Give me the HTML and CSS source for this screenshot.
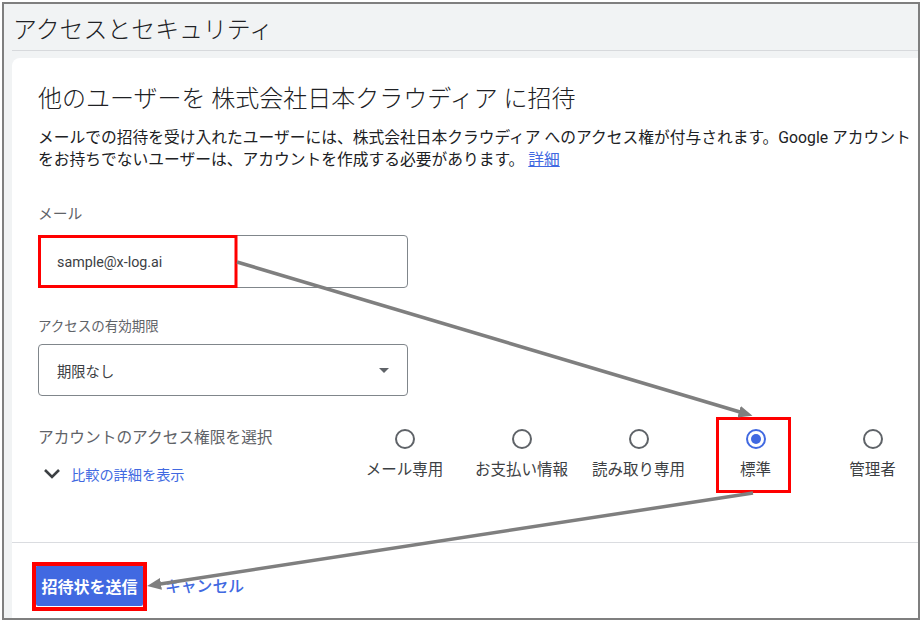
FILE: index.html
```html
<!DOCTYPE html>
<html lang="ja">
<head>
<meta charset="utf-8">
<title>アクセスとセキュリティ</title>
<link rel="stylesheet" href="styles.css">
</head>
<body>
<div class="frame">
  <header class="topbar">アクセスとセキュリティ</header>
  <main class="card">
    <div class="card-body">
      <h1 class="heading">他のユーザーを 株式会社日本クラウディア に招待</h1>
      <p class="desc">メールでの招待を受け入れたユーザーには、株式会社日本クラウディア へのアクセス権が付与されます。Google アカウント<br>をお持ちでないユーザーは、アカウントを作成する必要があります。 <a class="link-u" href="#">詳細</a></p>

      <label class="field-label label-mail">メール</label>
      <div class="input">sample@x-log.ai</div>

      <label class="field-label label-exp">アクセスの有効期限</label>
      <div class="select">
        <span>期限なし</span>
        <span class="caret"></span>
      </div>

      <div class="perm">
        <div class="perm-left">
          <div class="perm-label">アカウントのアクセス権限を選択</div>
          <div class="compare">
            <svg class="chev" width="18" height="11" viewBox="0 0 18 11"><path d="M2 2 L9 9 L16 2" fill="none" stroke="#3c4043" stroke-width="2.6"/></svg>
            <a href="#" class="link">比較の詳細を表示</a>
          </div>
        </div>
        <div class="radios">
          <div class="opt"><span class="radio"></span><span class="opt-label">メール専用</span></div>
          <div class="opt"><span class="radio"></span><span class="opt-label">お支払い情報</span></div>
          <div class="opt"><span class="radio"></span><span class="opt-label">読み取り専用</span></div>
          <div class="opt"><span class="radio on"></span><span class="opt-label">標準</span></div>
          <div class="opt"><span class="radio"></span><span class="opt-label">管理者</span></div>
        </div>
      </div>
    </div>
    <div class="card-footer">
      <button class="btn">招待状を送信</button>
      <a href="#" class="cancel">キャンセル</a>
    </div>
  </main>
</div>

<svg class="notes" width="922" height="622" viewBox="0 0 922 622">
  <defs>
    <marker id="ah" markerUnits="userSpaceOnUse" markerWidth="14" markerHeight="12" refX="1" refY="6" orient="auto">
      <path d="M0 0 L14 6 L0 12 Z" fill="#7f7f7f"/>
    </marker>
  </defs>
  <rect x="39.5" y="236.5" width="196.5" height="50" fill="none" stroke="#ff0000" stroke-width="3"/>
  <rect x="717.5" y="418.5" width="72" height="73" fill="none" stroke="#ff0000" stroke-width="3"/>
  <rect x="34" y="564" width="111" height="45" fill="none" stroke="#ff0000" stroke-width="4"/>
  <line x1="237" y1="262" x2="740" y2="412" stroke="#7f7f7f" stroke-width="3.5" marker-end="url(#ah)"/>
  <line x1="753" y1="493" x2="160" y2="584" stroke="#7f7f7f" stroke-width="3.5" marker-end="url(#ah)"/>
</svg>
</body>
</html>
```

FILE: styles.css
```css
* { box-sizing: border-box; }

html, body {
  margin: 0;
  padding: 0;
  width: 922px;
  height: 622px;
  overflow: hidden;
  background: #ffffff;
  font-family: Roboto, "Noto Sans CJK JP", sans-serif;
  color: #202124;
}

body { position: relative; }

.frame {
  margin: 2px;
  width: 918px;
  height: 618px;
  border: 2px solid #7f7f7f;
  background: #f1f3f4;
  overflow: hidden;
  display: flex;
  flex-direction: column;
}

.topbar {
  flex: none;
  height: 47px;
  margin-left: 8px;
  padding-left: 1px;
  border-bottom: 1px solid #d7d9dc;
  display: flex;
  align-items: center;
  font-size: 23.9px;
  font-weight: 300;
  color: #202124;
}

.card {
  flex: 1;
  margin: 7px 0 0 8px;
  background: #ffffff;
  border-radius: 8px 0 0 0;
  display: flex;
  flex-direction: column;
}

.card-body {
  padding: 25px 0 0 26px;
  height: 485px;
  border-bottom: 1px solid #dadce0;
}

.heading {
  margin: 0;
  font-size: 24px;
  font-weight: 300;
  line-height: 32px;
  color: #202124;
}

.desc {
  margin: 12px 0 0;
  font-size: 15.75px;
  line-height: 22px;
  color: #202124;
}

.link-u {
  color: #4169e1;
  text-decoration: underline;
}

.field-label {
  display: block;
  line-height: 20px;
  color: #5f6368;
}

.label-mail {
  margin-top: 33px;
  font-size: 14.8px;
}

.label-exp {
  margin-top: 28px;
  font-size: 13.5px;
}

.input {
  margin-top: 11px;
  width: 370px;
  height: 53px;
  border: 1px solid #80868b;
  border-radius: 4px;
  padding-left: 18px;
  display: flex;
  align-items: center;
  font-size: 14.3px;
  color: #3c4043;
}

.select {
  margin-top: 8px;
  width: 370px;
  height: 52px;
  border: 1px solid #80868b;
  border-radius: 4px;
  padding: 0 18px 0 18px;
  display: flex;
  align-items: center;
  justify-content: space-between;
  font-size: 14.3px;
  color: #3c4043;
}

.caret {
  width: 0;
  height: 0;
  border-left: 5px solid transparent;
  border-right: 5px solid transparent;
  border-top: 5px solid #5f6368;
}

.perm {
  margin-top: 32px;
  display: flex;
}

.perm-left {
  width: 308px;
  flex: none;
}

.perm-label {
  font-size: 15.7px;
  line-height: 20px;
  color: #5f6368;
}

.compare {
  margin-top: 17px;
  height: 20px;
  display: flex;
  align-items: center;
  padding-left: 5px;
  gap: 10px;
}

.chev { display: block; margin-top: -4px; }

.link {
  color: #4169e1;
  text-decoration: none;
  font-size: 14.2px;
  line-height: 20px;
}

.radios {
  display: grid;
  grid-template-columns: repeat(5, 117px);
}

.opt {
  display: flex;
  flex-direction: column;
  align-items: center;
}

.radio {
  margin-top: 1px;
  width: 20px;
  height: 20px;
  border: 2px solid #5f6368;
  border-radius: 50%;
  display: flex;
  align-items: center;
  justify-content: center;
}

.radio.on { border-color: #4169e1; }
.radio.on::after {
  content: "";
  width: 10px;
  height: 10px;
  border-radius: 50%;
  background: #4169e1;
}

.opt-label {
  margin-top: 11px;
  font-size: 15.5px;
  line-height: 20px;
  color: #3c4043;
}

.card-footer {
  padding: 22px 0 0 24px;
  display: flex;
  align-items: center;
  gap: 22px;
}

.btn {
  width: 107px;
  height: 41px;
  border: none;
  border-radius: 2px;
  background: #4169e1;
  color: #ffffff;
  font-family: Roboto, "Noto Sans CJK JP", sans-serif;
  font-size: 16px;
  font-weight: 700;
  padding: 0;
}

.cancel {
  color: #4169e1;
  text-decoration: none;
  font-size: 15.8px;
  font-weight: 500;
}

.notes {
  position: absolute;
  left: 0;
  top: 0;
  pointer-events: none;
}
```
